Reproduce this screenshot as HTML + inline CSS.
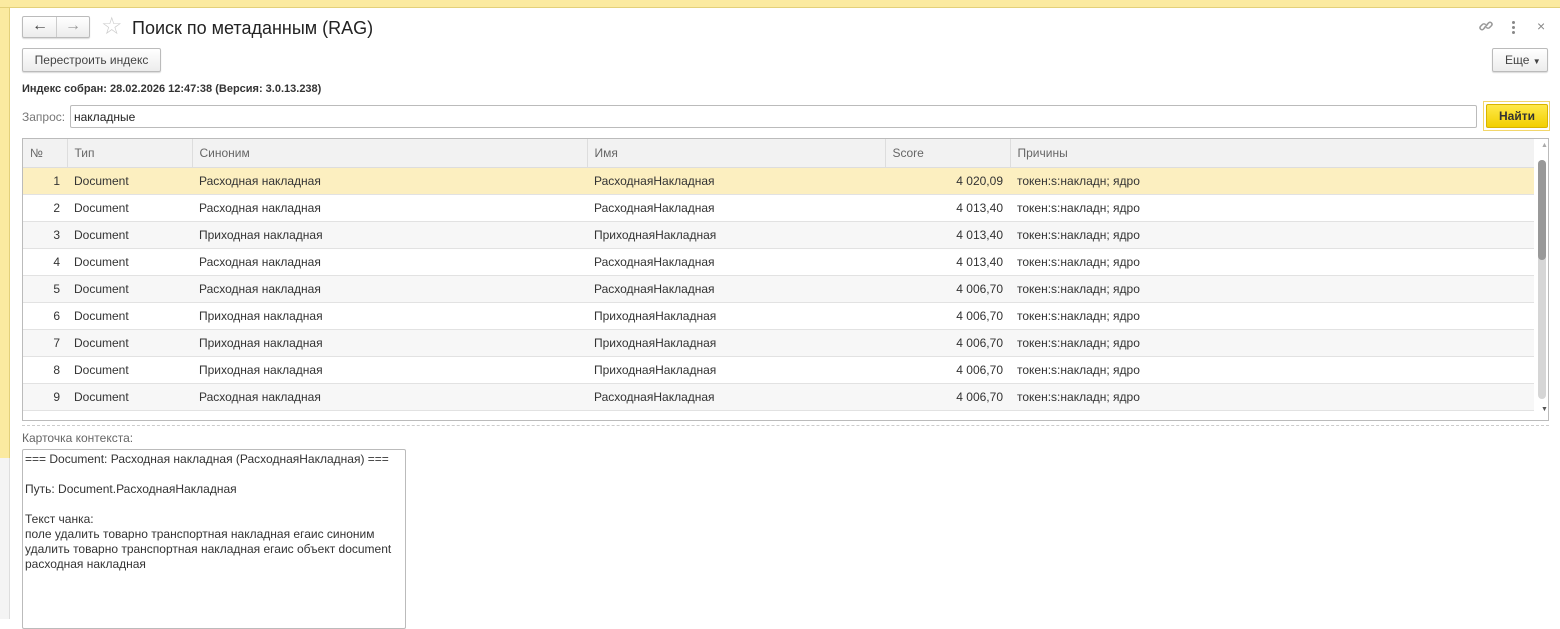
<!DOCTYPE html>
<html><head><meta charset="utf-8">
<style>
*{box-sizing:border-box;margin:0;padding:0}
body{width:1560px;height:619px;overflow:hidden;background:#fff;font-family:"Liberation Sans",Arial,sans-serif;font-size:12px;color:#333;position:relative}
.a{position:absolute}
.topbar{left:0;top:0;width:1560px;height:8px;background:#fbeaa0;border-bottom:1px solid #e3d07a}
.lstrip{left:0;top:8px;width:10px;height:450px;background:#fbeaa0;border-right:1px solid #e3d07a}
.lstrip2{left:0;top:458px;width:10px;height:161px;background:#f4f4f4;border-right:1px solid #ddd}
.btn{border:1px solid #bbb;border-radius:2px;background:linear-gradient(#fff,#ececec);box-shadow:0 1px 1px rgba(0,0,0,.15);color:#444;font-size:12px;text-align:center}
table{border-collapse:collapse;table-layout:fixed}
td{height:27px;padding:0 7px;white-space:nowrap;overflow:hidden;border-bottom:1px solid #e2e2e2;color:#333;font-size:12px}
th{height:28px;padding:0 7px;font-weight:normal;text-align:left;color:#666;background:#f2f2f2;border-right:1px solid #ddd;border-bottom:1px solid #ddd;font-size:12px}
tr.alt td{background:#f7f7f7}
tr.sel td{background:#fcefc0}
td.n,td.s{text-align:right}
</style></head><body>
<div class="a topbar"></div>
<div class="a lstrip"></div>
<div class="a lstrip2"></div>

<div class="a btn" style="left:22px;top:16px;width:68px;height:22px"></div>
<div class="a" style="left:56px;top:17px;width:1px;height:20px;background:#ccc"></div>
<div class="a" style="left:32px;top:17px;font-size:16px;color:#444;font-weight:bold">&#8592;</div>
<div class="a" style="left:65px;top:17px;font-size:16px;color:#999;font-weight:bold">&#8594;</div>
<div class="a" style="left:101px;top:12px;font-size:24px;color:#ccc">&#9734;</div>
<div class="a" style="left:132px;top:18px;font-size:18px;color:#222">Поиск по метаданным (RAG)</div>
<svg class="a" style="left:1478px;top:18px" width="16" height="16" viewBox="0 0 16 16" fill="none" stroke="#999" stroke-width="1.5" stroke-linecap="round"><path d="M7 9.5l-1.8 1.8a2 2 0 01-2.8-2.8L4.5 6.4a2 2 0 012.8 0"/><path d="M9 6.5l1.8-1.8a2 2 0 012.8 2.8L11.5 9.6a2 2 0 01-2.8 0"/><path d="M6.5 9.5l3-3"/></svg>
<div class="a" style="left:1512px;top:21px;width:3px;height:3px;background:#888;border-radius:50%"></div>
<div class="a" style="left:1512px;top:26px;width:3px;height:3px;background:#888;border-radius:50%"></div>
<div class="a" style="left:1512px;top:31px;width:3px;height:3px;background:#888;border-radius:50%"></div>
<div class="a" style="left:1537px;top:18px;font-size:14px;color:#888">&#215;</div>

<div class="a btn" style="left:22px;top:48px;width:139px;height:24px;line-height:22px">Перестроить индекс</div>
<div class="a btn" style="left:1492px;top:48px;width:56px;height:24px;line-height:22px;text-align:left;padding-left:12px">Еще <span style="font-size:8px">&#9660;</span></div>

<div class="a" style="left:22px;top:83px;font-size:11px;font-weight:bold;color:#333">Индекс собран: 28.02.2026 12:47:38 (Версия: 3.0.13.238)</div>

<div class="a" style="left:22px;top:110px;color:#777">Запрос:</div>
<div class="a" style="left:70px;top:105px;width:1407px;height:23px;border:1px solid #bbb;border-radius:2px;padding:4px 3px;color:#222">накладные</div>
<div class="a" style="left:1483px;top:101px;width:67px;height:30px;border:1px solid #f2d66a"></div>
<div class="a" style="left:1486px;top:104px;width:62px;height:24px;background:linear-gradient(#ffe94a,#f2cf00);border:1px solid #d8b400;border-radius:2px;text-align:center;line-height:22px;font-weight:bold;color:#333">Найти</div>

<div class="a" style="left:22px;top:138px;width:1527px;height:283px;border:1px solid #bbb;overflow:hidden">
<table style="width:1511px">
<colgroup><col style="width:44px"><col style="width:125px"><col style="width:395px"><col style="width:298px"><col style="width:125px"><col style="width:524px"></colgroup>
<tr><th>№</th><th>Тип</th><th>Синоним</th><th>Имя</th><th>Score</th><th style="border-right:none">Причины</th></tr>
<tr class="sel"><td class="n">1</td><td>Document</td><td>Расходная накладная</td><td>РасходнаяНакладная</td><td class="s">4 020,09</td><td>токен:s:накладн; ядро</td></tr>
<tr><td class="n">2</td><td>Document</td><td>Расходная накладная</td><td>РасходнаяНакладная</td><td class="s">4 013,40</td><td>токен:s:накладн; ядро</td></tr>
<tr class="alt"><td class="n">3</td><td>Document</td><td>Приходная накладная</td><td>ПриходнаяНакладная</td><td class="s">4 013,40</td><td>токен:s:накладн; ядро</td></tr>
<tr><td class="n">4</td><td>Document</td><td>Расходная накладная</td><td>РасходнаяНакладная</td><td class="s">4 013,40</td><td>токен:s:накладн; ядро</td></tr>
<tr class="alt"><td class="n">5</td><td>Document</td><td>Расходная накладная</td><td>РасходнаяНакладная</td><td class="s">4 006,70</td><td>токен:s:накладн; ядро</td></tr>
<tr><td class="n">6</td><td>Document</td><td>Приходная накладная</td><td>ПриходнаяНакладная</td><td class="s">4 006,70</td><td>токен:s:накладн; ядро</td></tr>
<tr class="alt"><td class="n">7</td><td>Document</td><td>Приходная накладная</td><td>ПриходнаяНакладная</td><td class="s">4 006,70</td><td>токен:s:накладн; ядро</td></tr>
<tr><td class="n">8</td><td>Document</td><td>Приходная накладная</td><td>ПриходнаяНакладная</td><td class="s">4 006,70</td><td>токен:s:накладн; ядро</td></tr>
<tr class="alt"><td class="n">9</td><td>Document</td><td>Расходная накладная</td><td>РасходнаяНакладная</td><td class="s">4 006,70</td><td>токен:s:накладн; ядро</td></tr>
</table>
<div class="a" style="left:1514px;top:0;width:12px;height:281px;background:#fff"></div>
<div class="a" style="left:1518px;top:3px;font-size:7px;color:#aaa">&#9650;</div>
<div class="a" style="left:1515px;top:21px;width:8px;height:239px;background:#d6d6d6;border-radius:4px"></div>
<div class="a" style="left:1515px;top:21px;width:8px;height:100px;background:#999;border-radius:4px"></div>
<div class="a" style="left:1518px;top:267px;font-size:7px;color:#555">&#9660;</div>
</div>
<div class="a" style="left:22px;top:425px;width:1527px;border-top:1px dashed #ccc"></div>

<div class="a" style="left:22px;top:431px;color:#666">Карточка контекста:</div>
<div class="a" style="left:22px;top:449px;width:384px;height:180px;border:1px solid #bbb;border-radius:2px;padding:2px 2px;line-height:15px;color:#333;white-space:pre">=== Document: Расходная накладная (РасходнаяНакладная) ===

Путь: Document.РасходнаяНакладная

Текст чанка:
поле удалить товарно транспортная накладная егаис синоним
удалить товарно транспортная накладная егаис объект document
расходная накладная</div>
</body></html>
